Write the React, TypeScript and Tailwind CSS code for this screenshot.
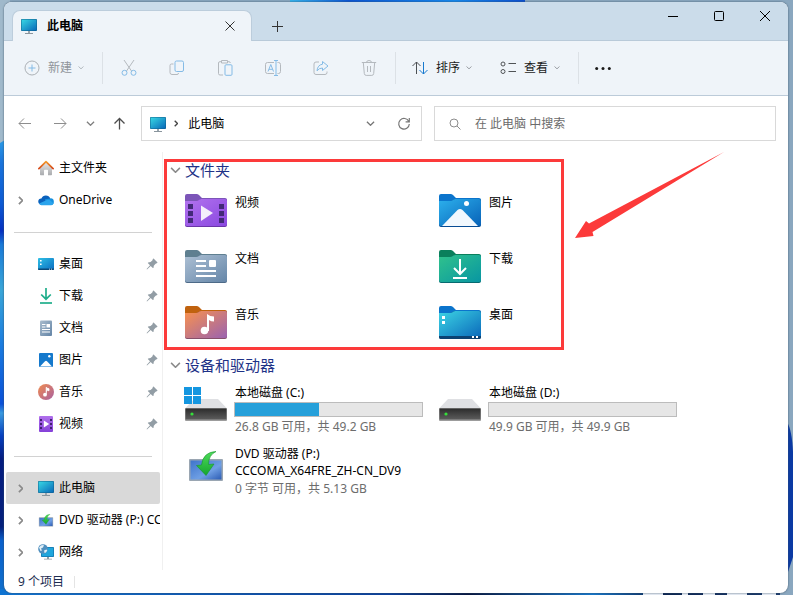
import type { ReactNode } from "react";
import clsx from "clsx";

type IconProps = { className?: string };

function Wallpaper() {
  return (
    <svg
      aria-hidden="true"
      className="absolute inset-0 h-full w-full"
      preserveAspectRatio="none"
      viewBox="0 0 793 595"
    >
      <defs>
        <linearGradient id="wall-top" x1="0" x2="1" y1="0" y2="0">
          <stop offset="0" stopColor="#35b4ee" />
          <stop offset="0.25" stopColor="#0a55d4" />
          <stop offset="0.7" stopColor="#1488ee" />
          <stop offset="1" stopColor="#0b4fd0" />
        </linearGradient>
        <linearGradient id="wall-left" x1="0" x2="0" y1="0" y2="1">
          <stop offset="0" stopColor="#2b9be6" />
          <stop offset="0.05" stopColor="#1a74dc" />
          <stop offset="0.14" stopColor="#0c5ad4" />
          <stop offset="0.2" stopColor="#0530c0" />
          <stop offset="0.23" stopColor="#1a7ad8" />
          <stop offset="0.33" stopColor="#3aa6d8" />
          <stop offset="0.45" stopColor="#1a7ce0" />
          <stop offset="0.58" stopColor="#0a50d8" />
          <stop offset="0.6" stopColor="#3a9ae0" />
          <stop offset="0.65" stopColor="#0640c0" />
          <stop offset="0.7" stopColor="#041c80" />
          <stop offset="0.85" stopColor="#04207c" />
          <stop offset="0.88" stopColor="#0a60cc" />
          <stop offset="1" stopColor="#1070cc" />
        </linearGradient>
        <linearGradient id="wall-bottom" x1="0" x2="1" y1="0" y2="0">
          <stop offset="0" stopColor="#0f74d2" />
          <stop offset="0.5" stopColor="#0a3f9c" />
          <stop offset="0.6" stopColor="#06153f" />
          <stop offset="0.76" stopColor="#1577cc" />
          <stop offset="0.85" stopColor="#0a2350" />
          <stop offset="1" stopColor="#1a3a6c" />
        </linearGradient>
      </defs>
      <rect fill="#8aa7bf" height="595" width="793" />
      <rect fill="#a0b9cb" height="150" width="10" />
      <rect fill="url(#wall-top)" height="3" width="235" x="290" />
      <path d="M0 143l5 -3v455H0z" fill="url(#wall-left)" />
      <rect fill="url(#wall-bottom)" height="6" width="780" y="589" />
      <path d="M787 422q5 8 6 30v105l-6 18z" fill="#0b3aa4" />
      <path
        d="M643 594h20M682 594h6M703 594h12M727 594h20M762 594h14"
        stroke="#e8eef6"
        strokeWidth="2"
      />
    </svg>
  );
}

function MonitorIcon({ className }: IconProps) {
  return (
    <svg aria-hidden="true" className={clsx("h-4 w-4 shrink-0", className)} viewBox="0 0 16 16">
      <defs>
        <linearGradient id="monitor" x1="0" x2="1" y1="0" y2="1">
          <stop offset="0" stopColor="#38d8e4" />
          <stop offset="1" stopColor="#0868b8" />
        </linearGradient>
      </defs>
      <rect fill="#10608c" height="12" rx="1" width="16" y="1" />
      <rect fill="url(#monitor)" height="11" rx="0.5" width="15" x="0.5" y="1.5" />
      <path d="M7 13h2v2H7z" fill="#9aa5ad" />
      <path d="M4 15.500h8" stroke="#8a959d" />
    </svg>
  );
}

function HomeIcon() {
  return (
    <svg aria-hidden="true" className="h-4 w-4 shrink-0" viewBox="0 0 16 16">
      <defs>
        <linearGradient id="home-roof" x1="0" x2="0" y1="0" y2="1">
          <stop offset="0" stopColor="#f39a2c" />
          <stop offset="1" stopColor="#d4481c" />
        </linearGradient>
        <linearGradient id="home-wall" x1="0" x2="0" y1="0" y2="1">
          <stop offset="0" stopColor="#e8e8e8" />
          <stop offset="1" stopColor="#a9abae" />
        </linearGradient>
      </defs>
      <path d="M2 8l6-6 6 6v6.5q0 .8-.8.8H10V10.500q0-.7-.7-.7H6.700q-.7 0-.7.7v4.800H2.800q-.8 0-.8-.8z" fill="url(#home-wall)" />
      <path d="M.9 8.600L8 1.700l7.100 6.900" fill="none" stroke="url(#home-roof)" strokeLinecap="round" strokeLinejoin="round" strokeWidth="1.7" />
    </svg>
  );
}

function OneDriveIcon() {
  return (
    <svg aria-hidden="true" className="h-4 w-4 shrink-0" viewBox="0 0 16 16">
      <path d="M3.200 12.500A3 3 0 0 1 3.400 6.400 4.800 4.800 0 0 1 12.300 6.500L10 12.500z" fill="#0b62bd" />
      <path d="M7 7.300l5.200-.9A3.200 3.200 0 0 1 13 12.800L8 12z" fill="#1590df" />
      <path d="M1.100 11.600L9 7.900q2-.6 3.600.9l3 2.600q-.8 1.900-2.700 1.900H3.300q-1.500 0-2.200-1.700z" fill="#2ba4ec" />
    </svg>
  );
}

function SmallDesktopIcon() {
  return (
    <svg aria-hidden="true" className="h-4 w-4 shrink-0" viewBox="0 0 16 16">
      <defs>
        <linearGradient id="desk-small" x1="0" x2="1" y1="0" y2="1">
          <stop offset="0" stopColor="#2fc0e6" />
          <stop offset="1" stopColor="#0a6cc0" />
        </linearGradient>
      </defs>
      <rect fill="url(#desk-small)" height="12" rx="1" width="16" y="2" />
      <path d="M0 12.500h16V13q0 1-1 1H1q-1 0-1-1z" fill="#0a4878" />
      <path d="M2 4h1.600v1.600H2zM2 7.500h1.600v1.600H2zM11 12.800h1v.8h-1zM13 12.800h1v.8h-1z" fill="#fff" />
    </svg>
  );
}

function SmallDownloadIcon() {
  return (
    <svg aria-hidden="true" className="h-4 w-4 shrink-0" viewBox="0 0 16 16">
      <g fill="none" stroke="#1fae8b" strokeWidth="1.700">
        <path d="M8 0v11M3.200 6.500L8 11.200l4.800-4.700" />
        <path d="M2 15h12" />
      </g>
    </svg>
  );
}

function SmallDocumentIcon() {
  return (
    <svg aria-hidden="true" className="h-4 w-4 shrink-0" viewBox="0 0 16 16">
      <defs>
        <linearGradient id="doc-small" x1="0" x2="1" y1="0" y2="1">
          <stop offset="0" stopColor="#a9bccd" />
          <stop offset="1" stopColor="#6384a6" />
        </linearGradient>
      </defs>
      <rect fill="url(#doc-small)" height="15.500" rx="1" width="12" x="2" y="0.500" />
      <path d="M4 4.500h3.500M4 7h3.500M4 9.500h8M4 12h8" stroke="#fff" />
      <path d="M8.500 4H12v3.500H8.500z" fill="#fff" />
    </svg>
  );
}

function SmallPictureIcon() {
  return (
    <svg aria-hidden="true" className="h-4 w-4 shrink-0" viewBox="0 0 16 16">
      <rect fill="#1579cc" height="14" rx="1" width="14" x="1" y="1" />
      <path d="M2 14.500l5-5.200q1-.9 2 0l5 5.200z" fill="#fff" />
      <circle cx="11.300" cy="4.300" fill="#fff" r="1.200" />
    </svg>
  );
}

function SmallMusicIcon() {
  return (
    <svg aria-hidden="true" className="h-4 w-4 shrink-0" viewBox="0 0 16 16">
      <defs>
        <linearGradient id="music-small" x1="0" x2="1" y1="0" y2="1">
          <stop offset="0" stopColor="#f08c50" />
          <stop offset="1" stopColor="#a960a0" />
        </linearGradient>
      </defs>
      <circle cx="8" cy="8" fill="url(#music-small)" r="8" />
      <circle cx="7" cy="10.700" fill="#fff" r="1.900" />
      <path d="M8.200 10.500V3.300q1.400 1.400 2.800 1.400v2q-1 0-1.700-.5" fill="#fff" stroke="#fff" strokeWidth="0.800" />
    </svg>
  );
}

function SmallVideoIcon() {
  return (
    <svg aria-hidden="true" className="h-4 w-4 shrink-0" viewBox="0 0 16 16">
      <defs>
        <linearGradient id="video-small" x1="0" x2="0" y1="0" y2="1">
          <stop offset="0" stopColor="#b070ec" />
          <stop offset="1" stopColor="#8440d8" />
        </linearGradient>
      </defs>
      <rect fill="url(#video-small)" height="16" rx="1" width="14" x="1" />
      <path d="M2 3h2v2H2zM2 7h2v2H2zM2 11h2v2H2zM12 3h2v2h-2zM12 7h2v2h-2zM12 11h2v2h-2z" fill="#412070" />
      <path d="M5.800 4.500l5.400 3.500-5.400 3.500z" fill="#fff" />
    </svg>
  );
}

function DvdIcon({ className }: IconProps) {
  return (
    <svg aria-hidden="true" className={clsx("shrink-0", className)} viewBox="0 0 34 31">
      <defs>
        <linearGradient id="dvd-screen" x1="0" x2="1" y1="0" y2="1">
          <stop offset="0" stopColor="#3d74cb" />
          <stop offset="0.6" stopColor="#6f9fe4" />
          <stop offset="1" stopColor="#2c5cb4" />
        </linearGradient>
        <linearGradient id="dvd-arrow" x1="0" x2="0" y1="0" y2="1">
          <stop offset="0" stopColor="#4fdc5a" />
          <stop offset="1" stopColor="#14a52e" />
        </linearGradient>
      </defs>
      <rect fill="#9aa6b2" height="22" rx="1" width="34" y="8" />
      <rect fill="url(#dvd-screen)" height="19" width="31" x="1.500" y="9.500" />
      <path
        d="M27 .5Q14 1 12.500 14L7.500 14.500 17 24.500 25 13 19.500 13.500Q19.500 4 27 .5z"
        fill="url(#dvd-arrow)"
        stroke="#16962c"
        strokeWidth="0.600"
      />
    </svg>
  );
}

function NetworkIcon() {
  return (
    <svg aria-hidden="true" className="h-4 w-4 shrink-0" viewBox="0 0 16 16">
      <rect fill="#0f5f98" height="10" rx="1" width="13" x="3" y="3" />
      <rect fill="#20a6dc" height="9" width="12" x="3.500" y="3.500" />
      <path d="M9 13h2v2H9zM6 14.700h8v.8H6z" fill="#8f9aa2" />
      <circle cx="5" cy="5" fill="#4f8fbe" r="4.800" />
      <path d="M1 3.500Q3 .5 6 1.200L5 3.500 3 4.500l1 2-1.500.5zM6 6.500l2.500-1 .8 1Q8 9 6.500 9z" fill="#e0eef6" />
    </svg>
  );
}

function PinIcon() {
  return (
    <svg aria-hidden="true" className="h-3 w-3 shrink-0" viewBox="0 0 12 12">
      <path
        d="M7 .8q.4-.4.8 0l3.500 3.400q.4.500-.1.800l-1.600.7-1.800 2-.3 2q-.2.600-.7.200L4.700 8 1 11.400.6 11 4 7.300 2 5.200q-.4-.5.200-.7l2.300-.4 1.800-1.700z"
        fill="#929da5"
      />
    </svg>
  );
}

function ChevronIcon({ className }: IconProps) {
  return (
    <svg aria-hidden="true" className={clsx("shrink-0", className)} fill="none" viewBox="0 0 10 6">
      <path d="M1 .8l4 4 4-4" stroke="currentColor" strokeWidth="1.400" />
    </svg>
  );
}

function ChevronRightIcon({ className }: IconProps) {
  return (
    <svg aria-hidden="true" className={clsx("shrink-0", className)} fill="none" viewBox="0 0 6 10">
      <path d="M1 1l4 4-4 4" stroke="currentColor" strokeWidth="1.900" />
    </svg>
  );
}

type FolderKind = "video" | "picture" | "document" | "download" | "music" | "desktop";

const folderColors: Record<FolderKind, { back: string; from: string; to: string; edge: string }> = {
  video: { back: "#7c55b8", from: "#b273ee", to: "#8a48e0", edge: "#6a35a8" },
  picture: { back: "#0b74cc", from: "#2cb0ec", to: "#0862b8", edge: "#084c94" },
  document: { back: "#5f7f90", from: "#adc0d4", to: "#6586a8", edge: "#4d6a88" },
  download: { back: "#0a7f5c", from: "#30c28c", to: "#0896a2", edge: "#076a70" },
  music: { back: "#c0620e", from: "#f9924e", to: "#9a62b0", edge: "#86506a" },
  desktop: { back: "#0b74cc", from: "#3cd4e4", to: "#0a68ba", edge: "#0a4070" },
};

const folderGlyphs: Record<FolderKind, ReactNode> = {
  video: (
    <>
      <path
        d="M3 10h5v5H3zM3 17h5v5H3zM3 24h5v5H3zM34 10h5v5h-5zM34 17h5v5h-5zM34 24h5v5h-5z"
        fill="#432a78"
      />
      <path d="M16 11.500l12 7.500-12 8z" fill="#f4eefb" />
    </>
  ),
  picture: (
    <>
      <path d="M3 32L18.500 16q2.500-2 5 0L39 32z" fill="#f1f8fe" />
      <circle cx="27.500" cy="9.500" fill="#fff" r="2.500" />
    </>
  ),
  document: (
    <>
      <path d="M11 11h10M11 16h10M11 21h20M11 26h20" stroke="#fff" strokeWidth="2" />
      <rect fill="#fff" height="7" rx="1" width="7" x="24" y="10" />
    </>
  ),
  download: (
    <g fill="none" stroke="#fff" strokeWidth="2">
      <path d="M21 9v15M15 18l6 6 6-6M14 28h14" />
    </g>
  ),
  music: (
    <>
      <circle cx="19.500" cy="24.500" fill="#fff" r="3.800" />
      <path d="M22 25V8q3 2.500 7 2.500v5q-3 0-5-1.500V25z" fill="#fff" />
    </>
  ),
  desktop: (
    <>
      <path d="M0 30h42v1q0 2-2 2H2q-2 0-2-2z" fill="#0b4272" />
      <path d="M3 10h3v3H3zM3 15h3v3H3zM33 30h2v2h-2zM37 30h2v2h-2z" fill="#fff" />
    </>
  ),
};

function FolderIcon({ kind }: { kind: FolderKind }) {
  const { back, from, to, edge } = folderColors[kind];
  const gradientId = `folder-${kind}`;

  return (
    <svg aria-hidden="true" className="w-[42px] shrink-0" viewBox="0 0 42 33">
      <defs>
        <linearGradient id={gradientId} x1="0" x2="1" y1="0" y2="1">
          <stop offset="0" stopColor={from} />
          <stop offset="1" stopColor={to} />
        </linearGradient>
      </defs>
      <path d="M0 2q0-2 2-2h9.500q1.500 0 2.500 1l3 3h23q2 0 2 2v8H0z" fill={back} />
      <path d="M0 7h11q1.500 0 2.500-.8l1-.7q.8-.5 2-.5H40q2 0 2 2v24q0 2-2 2H2q-2 0-2-2z" fill={edge} />
      <path d="M0 7h11q1.500 0 2.500-.8l1-.7q.8-.5 2-.5H40q2 0 2 2v23q0 2-2 2H2q-2 0-2-2z" fill={`url(#${gradientId})`} />
      {folderGlyphs[kind]}
    </svg>
  );
}

function DriveIcon({ system }: { system?: boolean }) {
  return (
    <svg aria-hidden="true" className="h-[38px] w-[44px] shrink-0" viewBox="0 0 44 38">
      <defs>
        <linearGradient id="drive-front" x1="0" x2="0" y1="0" y2="1">
          <stop offset="0" stopColor="#2c2c2c" />
          <stop offset="1" stopColor="#5c5c5c" />
        </linearGradient>
      </defs>
      <path d="M10 15h24l8.500 9h-41z" fill="#dfe0e3" />
      <rect fill="#9c9c9c" height="13" rx="1" width="42" x="1" y="24" />
      <rect fill="url(#drive-front)" height="11" width="41" x="1.500" y="24.500" />
      <circle cx="8" cy="30" fill="#35e03a" r="1.600" />
      {system && (
        <path d="M0 3h8v8H0zM9 3h8v8H9zM0 12h8v8H0zM9 12h8v8H9z" fill="#1496e0" />
      )}
    </svg>
  );
}

function ToolButton({ label, children }: { label: string; children: ReactNode }) {
  return (
    <button aria-label={label} className="flex h-8 w-12 items-center justify-center" type="button">
      <svg aria-hidden="true" className="h-4 w-4" fill="none" stroke="#b4b9be" viewBox="0 0 16 16">
        {children}
      </svg>
    </button>
  );
}

function CommandBar() {
  return (
    <div className="flex h-[55px] items-center border-b border-[#bccbd9] bg-[#eff4f9]">
      <button className="ml-5 flex h-8 items-center text-[#8f959b]" type="button">
        <svg aria-hidden="true" className="h-4 w-4" fill="none" viewBox="0 0 16 16">
          <circle cx="8" cy="8" r="7" stroke="#abb0b5" />
          <path d="M8 4.500v7M4.500 8h7" stroke="#84bbe6" />
        </svg>
        <span className="ml-2">新建</span>
        <ChevronIcon className="ml-[6px] w-[6px] text-[#a4aab0]" />
      </button>
      <span className="ml-[18px] h-8 w-px bg-[#dce1e6]" />
      <div className="ml-[2px] flex">
        <ToolButton label="剪切">
          <path d="M3 0l7.500 11M13 0L5.500 11" />
          <circle cx="3.500" cy="12.800" r="2.500" stroke="#84bbe6" />
          <circle cx="12.500" cy="12.800" r="2.500" stroke="#84bbe6" />
        </ToolButton>
        <ToolButton label="复制">
          <path d="M4.500 4H2.500q-1.500 0-1.500 1.500v7Q1 14.500 3 14.500h5q1.500 0 1.500-1.500" />
          <rect height="10.500" rx="1.500" stroke="#84bbe6" width="8.500" x="6" y="1" />
        </ToolButton>
        <ToolButton label="粘贴">
          <path d="M6 15H3q-1.500 0-1.500-1.500V3Q1.500 1.700 3 1.700h1.500M10.500 1.700H12q1.300 0 1.300 1.300M4.500.500h6v2.500h-6z" />
          <rect height="10.500" rx="1" stroke="#84bbe6" width="7" x="8" y="4.800" />
        </ToolButton>
        <ToolButton label="重命名">
          <path d="M9 2.500H2.500Q.500 2.500.500 4.500v7q0 2 2 2H9M12.500 2.500h1q2 0 2 2v7q0 2-2 2h-1" />
          <path d="M3 11.500L5.800 4.500 8.500 11.500M4 9.300h3.600M11 .500v15M9 .500h4M9 15.500h4" stroke="#84bbe6" />
        </ToolButton>
        <ToolButton label="共享">
          <path d="M6 2H3Q1 2 1 4v8.500q0 2 2 2h9q2 0 2-2v-1" />
          <path d="M9.500 1.500l5.500 4.500-5.500 4.500V8Q6 8 4 10.800 4.500 5 9.500 4.200z" stroke="#84bbe6" strokeLinejoin="round" />
        </ToolButton>
        <ToolButton label="删除">
          <path d="M.8 2.500h14.400M5.500 2.500Q5.500.500 8 .500t2.500 2M2.300 2.500l1 11q.2 1.900 1.900 1.900h5.600q1.700 0 1.900-1.900l1-11M6.500 6v6M9.500 6v6" />
        </ToolButton>
      </div>
      <span className="ml-[2px] h-8 w-px bg-[#dce1e6]" />
      <button className="ml-4 flex h-8 items-center text-[#1b1b1b]" type="button">
        <svg aria-hidden="true" className="h-4 w-4" fill="none" viewBox="0 0 16 16">
          <path d="M4.500 14V2M.500 6l4-4 4 4" stroke="#4c4f52" />
          <path d="M11.500 2v12M7.500 10l4 4 4-4" stroke="#1779cf" />
        </svg>
        <span className="ml-2">排序</span>
        <ChevronIcon className="ml-[6px] w-[6px] text-[#85898d]" />
      </button>
      <button className="ml-7 flex h-8 items-center text-[#1b1b1b]" type="button">
        <svg aria-hidden="true" className="h-4 w-4" fill="none" stroke="#505356" viewBox="0 0 16 16">
          <circle cx="3" cy="4" r="2" />
          <circle cx="3" cy="11.500" r="2" />
          <path d="M8.500 3.500H16M8.500 11.500H16" />
        </svg>
        <span className="ml-2">查看</span>
        <ChevronIcon className="ml-[6px] w-[6px] text-[#85898d]" />
      </button>
      <span className="ml-[18px] h-8 w-px bg-[#dce1e6]" />
      <button aria-label="更多" className="ml-4 flex h-8 items-center" type="button">
        <svg aria-hidden="true" className="h-4 w-4" fill="#1b1b1b" viewBox="0 0 16 16">
          <circle cx="1.700" cy="8.500" r="1.500" />
          <circle cx="8" cy="8.500" r="1.500" />
          <circle cx="14.300" cy="8.500" r="1.500" />
        </svg>
      </button>
    </div>
  );
}

function TitleBar() {
  return (
    <header className="flex h-[39px] bg-[#cbdcea]">
      <div className="w-2 border-b border-[#b9cad9]" />
      <div className="mt-2 flex w-60 items-center rounded-t-lg border border-b-0 border-[#bccddc] bg-[#eff4f9] pr-3 pl-2">
        <MonitorIcon />
        <span className="ml-[10px] font-bold text-black">此电脑</span>
        <button aria-label="关闭标签页" className="ml-auto p-1" type="button">
          <svg aria-hidden="true" className="h-[10px] w-[10px]" stroke="#333" viewBox="0 0 10 10">
            <path d="M.5.500l9 9M9.500.500l-9 9" />
          </svg>
        </button>
      </div>
      <div className="flex flex-1 items-start justify-between border-b border-[#b9cad9]">
        <button aria-label="新建标签页" className="mt-2 flex h-8 w-[50px] items-center justify-center" type="button">
          <svg aria-hidden="true" className="h-[11px] w-[11px]" stroke="#333" viewBox="0 0 11 11">
            <path d="M5.500 0v11M0 5.500h11" />
          </svg>
        </button>
        <div className="flex">
          <button aria-label="最小化" className="flex h-7 w-[46px] items-center justify-center" type="button">
            <svg aria-hidden="true" className="h-[10px] w-[10px]" stroke="#000" viewBox="0 0 10 10">
              <path d="M0 5.500h10" />
            </svg>
          </button>
          <button aria-label="最大化" className="flex h-7 w-[46px] items-center justify-center" type="button">
            <svg aria-hidden="true" className="h-[10px] w-[10px]" fill="none" stroke="#000" viewBox="0 0 10 10">
              <rect height="9" rx="1" width="9" x="0.500" y="0.500" />
            </svg>
          </button>
          <button aria-label="关闭" className="flex h-7 w-[46px] items-center justify-center" type="button">
            <svg aria-hidden="true" className="h-[10px] w-[10px]" stroke="#000" viewBox="0 0 10 10">
              <path d="M0 0l10 10M10 0L0 10" />
            </svg>
          </button>
        </div>
      </div>
    </header>
  );
}

function AddressRow() {
  return (
    <div className="flex items-center pt-[10px] pr-3 pb-[11px] pl-[14px]">
      <button aria-label="后退" className="text-[#8d8d8d]" type="button">
        <svg aria-hidden="true" className="h-[14px] w-[14px]" fill="none" stroke="currentColor" viewBox="0 0 14 14">
          <path d="M1 6.500h12M6 1.500l-5 5 5 5" />
        </svg>
      </button>
      <button aria-label="前进" className="ml-[21px] text-[#8d8d8d]" type="button">
        <svg aria-hidden="true" className="h-[14px] w-[14px]" fill="none" stroke="currentColor" viewBox="0 0 14 14">
          <path d="M1 6.500h12M8 1.500l5 5-5 5" />
        </svg>
      </button>
      <button aria-label="最近浏览的位置" className="ml-[19px]" type="button">
        <ChevronIcon className="w-[9px] text-[#808080]" />
      </button>
      <button aria-label="上移" className="ml-[18px] text-[#4d4d4d]" type="button">
        <svg aria-hidden="true" className="h-[14px] w-[14px]" fill="none" stroke="currentColor" strokeWidth="1.300" viewBox="0 0 14 14">
          <path d="M6.500 12.500V1.500M1.500 6.500l5-5 5 5" />
        </svg>
      </button>
      <div className="ml-[14px] flex h-[35px] flex-[87] items-center border border-[#d9d9d9] pr-[10px] pl-2">
        <MonitorIcon />
        <ChevronRightIcon className="ml-2 h-[7px] text-[#444]" />
        <a className="ml-[10px] text-black" href="#this-pc">
          此电脑
        </a>
        <button aria-label="以前的位置" className="ml-auto" type="button">
          <ChevronIcon className="w-[9px] text-[#777]" />
        </button>
        <button aria-label="刷新" className="ml-[22px]" type="button">
          <svg aria-hidden="true" className="h-[14px] w-[14px]" fill="none" stroke="#777" strokeWidth="1.200" viewBox="0 0 14 14">
            <path d="M11.800 4.500A5.300 5.300 0 1 0 12.300 7M12.300 1v3.800H8.600" />
          </svg>
        </button>
      </div>
      <label className="ml-3 flex h-[35px] flex-[104] items-center border border-[#d9d9d9] px-[14px]">
        <svg aria-hidden="true" className="h-3 w-3 shrink-0" fill="none" stroke="#8d8d8d" viewBox="0 0 12 12">
          <circle cx="5" cy="5" r="4" />
          <path d="M8 8l3.500 3.500" />
        </svg>
        <input
          aria-label="搜索"
          className="ml-[14px] w-full min-w-0 bg-transparent outline-none placeholder:text-[#6b6b6b]"
          placeholder="在 此电脑 中搜索"
          type="text"
        />
      </label>
    </div>
  );
}

type NavItem = {
  label: string;
  icon: ReactNode;
  expandable?: boolean;
  pinned?: boolean;
  selected?: boolean;
};

const navGroups: NavItem[][] = [
  [
    { label: "主文件夹", icon: <HomeIcon /> },
    { label: "OneDrive", icon: <OneDriveIcon />, expandable: true },
  ],
  [
    { label: "桌面", icon: <SmallDesktopIcon />, pinned: true },
    { label: "下载", icon: <SmallDownloadIcon />, pinned: true },
    { label: "文档", icon: <SmallDocumentIcon />, pinned: true },
    { label: "图片", icon: <SmallPictureIcon />, pinned: true },
    { label: "音乐", icon: <SmallMusicIcon />, pinned: true },
    { label: "视频", icon: <SmallVideoIcon />, pinned: true },
  ],
  [
    { label: "此电脑", icon: <MonitorIcon />, expandable: true, selected: true },
    { label: "DVD 驱动器 (P:) CCCOMA_X64FRE_ZH-CN_DV9", icon: <DvdIcon className="h-[13px] w-4" />, expandable: true },
    { label: "网络", icon: <NetworkIcon />, expandable: true },
  ],
];

function Sidebar() {
  return (
    <nav className="w-[159px] shrink-0 border-r border-[#f0f0f0] px-[2px]">
      {navGroups.map((group, index) => (
        <div key={index}>
          {index > 0 && (
            <div className="flex h-8 items-center px-2">
              <hr className="w-full border-[#d2d2d2]" />
            </div>
          )}
          {group.map((item) => (
            <a
              className={clsx(
                "flex h-8 items-center rounded-xs pl-3 text-black",
                item.selected && "bg-[#d9d9d9]",
              )}
              href={`#${item.label}`}
              key={item.label}
            >
              <span className="w-5 shrink-0">
                {item.expandable && <ChevronRightIcon className="h-[9px] text-[#8a8a8a]" />}
              </span>
              {item.icon}
              <span className="ml-[5px] min-w-0 flex-1 overflow-hidden whitespace-nowrap">{item.label}</span>
              {item.pinned && (
                <span className="mr-[2px]">
                  <PinIcon />
                </span>
              )}
            </a>
          ))}
        </div>
      ))}
    </nav>
  );
}

function GroupHeader({ children }: { children: ReactNode }) {
  return (
    <h2 className="flex h-5 items-center text-[15px] text-[#1e3287]">
      <ChevronIcon className="mr-1 w-[11px] text-[#8a8a8a]" />
      {children}
    </h2>
  );
}

const folders: { label: string; kind: FolderKind }[] = [
  { label: "视频", kind: "video" },
  { label: "图片", kind: "picture" },
  { label: "文档", kind: "document" },
  { label: "下载", kind: "download" },
  { label: "音乐", kind: "music" },
  { label: "桌面", kind: "desktop" },
];

const drives = [
  { label: "本地磁盘 (C:)", info: "26.8 GB 可用，共 49.2 GB", used: 45, system: true },
  { label: "本地磁盘 (D:)", info: "49.9 GB 可用，共 49.9 GB", used: 0, system: false },
];

function Content() {
  return (
    <main className="min-w-0 flex-1 pt-2 pl-[7px]">
      <section className="relative">
        <GroupHeader>文件夹</GroupHeader>
        <div className="mt-[14px] grid grid-cols-[254px_254px] gap-y-[23px] pl-[15px]">
          {folders.map((folder) => (
            <a className="flex items-start gap-2 text-black" href={`#${folder.kind}`} key={folder.kind}>
              <FolderIcon kind={folder.kind} />
              <span className="leading-[17px]">{folder.label}</span>
            </a>
          ))}
        </div>

        {/* Highlight frame and pointer */}
        <div className="pointer-events-none absolute -top-px -bottom-[11px] -left-[6px] w-[400px] border-3 border-[#fc3a3a]" />
        <svg
          aria-hidden="true"
          className="pointer-events-none absolute -top-2 left-[405px] h-[87px] w-[150px]"
          viewBox="0 0 150 87"
        >
          <path d="M149 0L14 71.500 11 69 0 86l18.500-2L17.500 80z" fill="#fc3a3a" />
        </svg>
      </section>

      <section className="mt-4">
        <GroupHeader>设备和驱动器</GroupHeader>
        <div className="mt-[9px] grid grid-cols-[254px_254px] gap-y-[10px] pl-[14px]">
          {drives.map((drive) => (
            <a className="flex gap-[6px]" href={`#${drive.label}`} key={drive.label}>
              <DriveIcon system={drive.system} />
              <div className="w-[189px]">
                <div className="pl-px leading-[17px] text-black">{drive.label}</div>
                <div className="mt-px h-[15px] border border-[#bcbcbc] bg-[#e6e6e6]">
                  <div className="h-full bg-[#26a0da]" style={{ width: `${drive.used}%` }} />
                </div>
                <div className="mt-px pl-px leading-[17px] text-[#6d6d6d]">{drive.info}</div>
              </div>
            </a>
          ))}
          <a className="flex gap-3" href="#dvd">
            <DvdIcon className="mt-[6px] ml-[5px] h-[31px] w-[34px]" />
            <div className="leading-[17px] text-black">
              <div>DVD 驱动器 (P:)</div>
              <div>CCCOMA_X64FRE_ZH-CN_DV9</div>
              <div className="mt-px text-[#6d6d6d]">0 字节 可用，共 5.13 GB</div>
            </div>
          </a>
        </div>
      </section>
    </main>
  );
}

export default function App() {
  return (
    <div className="relative flex min-h-screen pt-[2px] pr-[5px] pb-[2px] pl-1 font-['Noto_Sans','Noto_Sans_CJK_SC',sans-serif] text-xs">
      <Wallpaper />
      <div className="relative flex min-w-0 flex-1 flex-col overflow-hidden rounded-lg bg-white shadow-[0_0_2px_#3c5064]">
        <TitleBar />
        <CommandBar />
        <AddressRow />
        <div className="flex flex-1">
          <Sidebar />
          <Content />
        </div>
        <footer className="flex h-[23px] items-center pl-[14px] text-[#1c2c50]">
          <span>9 个项目</span>
          <span className="ml-[10px] h-3 w-px bg-[#e4e4e4]" />
        </footer>
      </div>
    </div>
  );
}
